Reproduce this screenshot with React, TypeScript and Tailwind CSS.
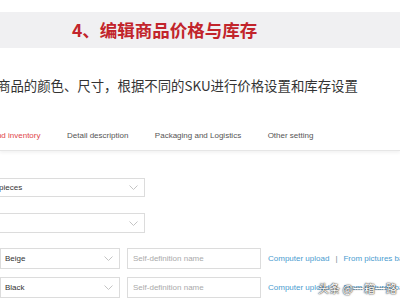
const sans = { fontFamily: '"Liberation Sans", Arial, sans-serif' };

function Chevron() {
  return (
    <svg width="9" height="5" viewBox="0 0 9 5" className="shrink-0">
      <polyline points="0.5,0.5 4.5,4.5 8.5,0.5" fill="none" stroke="#c4c4c4" strokeWidth="1" />
    </svg>
  );
}

function Select({ value, className }: { value?: string; className: string }) {
  return (
    <div
      className={`flex shrink-0 items-center justify-between border border-[#dcdcdc] bg-white pr-[6px] text-[8px] text-[#333] ${className}`}
    >
      <span>{value}</span>
      <Chevron />
    </div>
  );
}

function SkuRow({ color }: { color: string }) {
  return (
    <div className="flex h-[21px] items-center">
      <Select value={color} className="h-full w-[120px] pl-[4px]" />
      <div className="ml-[7px] flex h-full w-[134px] shrink-0 items-center border border-[#dcdcdc] bg-white pl-[5px] text-[8px] text-[#aaa]">
        Self-definition name
      </div>
      <div className="ml-[7px] flex shrink-0 items-center whitespace-nowrap text-[8px] text-[#4a9ccf]">
        <span>Computer upload</span>
        <span className="mx-[6px] text-[#7a8a99]">|</span>
        <span>From pictures bank</span>
      </div>
    </div>
  );
}

export default function App() {
  const tabs = ["Price and inventory", "Detail description", "Packaging and Logistics", "Other setting"];
  return (
    <div className="relative h-[300px] w-[400px] overflow-hidden bg-white" style={sans}>
      <div className="pt-[12px]">
        <div
          className="flex h-[36px] items-center bg-[#f0f0f2] pl-[72px] text-[17.5px] font-bold text-[#c2242b]"
          style={{ fontFamily: '"Noto Sans CJK SC", sans-serif' }}
        >
          4、编辑商品价格与库存
        </div>
      </div>

      <div
        className="mt-[27px] -ml-[3px] whitespace-nowrap text-[13.4px] leading-[20px] text-[#333]"
        style={{ fontFamily: '"Noto Sans CJK SC", sans-serif' }}
      >
        商品的颜色、尺寸，根据不同的SKU进行价格设置和库存设置
      </div>

      <div className="mt-[26px] flex h-[30px] items-center border-b border-[#e6e6e6] shadow-[0_2px_3px_rgba(0,0,0,0.05)]">
        <div className="-ml-[28px] flex items-center gap-[26.5px] whitespace-nowrap text-[8px] text-[#555]">
          {tabs.map((t, i) => (
            <span key={t} className={i === 0 ? "text-[#e0464b]" : ""}>
              {t}
            </span>
          ))}
        </div>
      </div>

      <Select value="pieces" className="-ml-[7px] mt-[27px] h-[19px] w-[152px] pl-[5px]" />
      <Select className="-ml-[7px] mt-[16px] h-[20px] w-[152px] pl-[5px]" />

      <div className="mt-[15px] flex flex-col gap-[8px]">
        <SkuRow color="Beige" />
        <SkuRow color="Black" />
      </div>

      <div
        className="absolute left-[318px] top-[280px] whitespace-nowrap text-[11px] text-white"
        style={{
          fontFamily: '"Noto Sans CJK SC", sans-serif',
          textShadow: "0 0 2px rgba(0,0,0,0.8), 0 0 1px rgba(0,0,0,0.9)",
        }}
      >
        头条 @一箱一路
      </div>
    </div>
  );
}
